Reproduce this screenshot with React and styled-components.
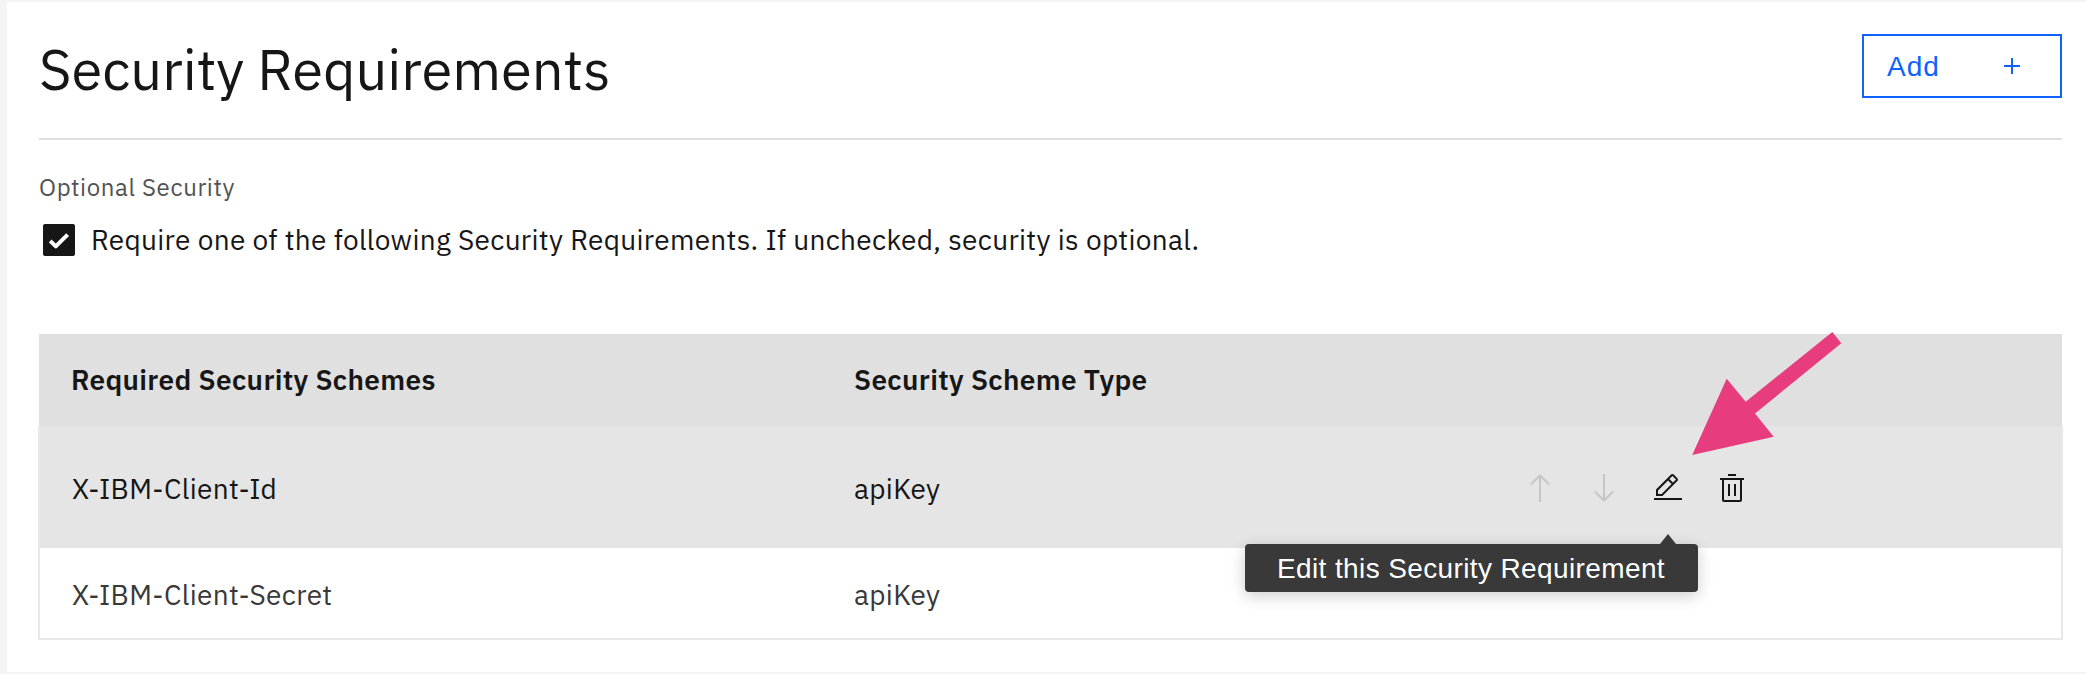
import React from "react";
import styled, { createGlobalStyle } from "styled-components";

const GlobalStyle = createGlobalStyle`
  * { box-sizing: border-box; }
  body {
    margin: 0;
    background: #f4f4f4;
    color: #161616;
    font-family: "IBM Plex Sans", Roboto, "Liberation Sans", sans-serif;
  }
`;

const Panel = styled.main`
  height: 670px;
  margin: 2px 0 2px 7px;
  padding: 32px 24px 0 32px;
  background: #fff;
`;

const Header = styled.header`
  display: flex;
  justify-content: space-between;
  align-items: flex-start;
  height: 106px;
  border-bottom: 2px solid #e0e0e0;
`;

const Title = styled.h1`
  margin: 0;
  font-size: 56px;
  line-height: 70px;
  font-weight: 400;
  letter-spacing: -0.03px;
  white-space: nowrap;
`;

const AddButton = styled.button`
  display: flex;
  justify-content: space-between;
  align-items: center;
  width: 200px;
  height: 64px;
  padding: 0 32px 0 23px;
  border: 2px solid #0f62fe;
  background: #fff;
  color: #0f62fe;
  font-family: "Liberation Sans", sans-serif;
  font-size: 28px;
  line-height: 36px;
  letter-spacing: 1px;
`;

const ButtonLabel = styled.span`
  padding-top: 2px;
`;

const GroupLabel = styled.div`
  margin-top: 31px;
  color: #525252;
  font-size: 24px;
  line-height: 32px;
  letter-spacing: 0.64px;
`;

const CheckRow = styled.label`
  display: flex;
  align-items: center;
  gap: 16px;
  height: 32px;
  margin-top: 21px;
  padding-left: 4px;
  font-size: 28px;
  line-height: 32px;
  letter-spacing: 0.32px;
  white-space: nowrap;
`;

const CheckBox = styled.span`
  display: flex;
  width: 32px;
  height: 32px;
  border-radius: 2px;
  background: #161616;
`;

const Table = styled.section`
  margin-top: 78px;
  font-size: 28px;
  line-height: 36px;
  letter-spacing: 0.32px;
`;

const TableHead = styled.div`
  display: grid;
  grid-template-columns: 783px 670px 1fr;
  align-items: center;
  height: 92px;
  padding: 0 0 1px 32px;
  background: #e0e0e0;
  font-weight: 600;
`;

const TableRow = styled.div`
  display: grid;
  grid-template-columns: 782px 670px 1fr;
  align-items: center;
  height: ${(p) => (p.$active ? 122 : 92)}px;
  margin: 0 -1px;
  padding: ${(p) => (p.$active ? 2 : 4)}px 0 0 32px;
  border: solid #e8e8e8;
  border-width: 0 2px ${(p) => (p.$active ? 0 : 2)}px;
  background: ${(p) => (p.$active ? "#e5e5e5" : "#fff")};
  color: ${(p) => (p.$active ? "#161616" : "#393939")};
`;

const Cell = styled.span`
  padding-top: ${(p) => p.$drop || 0}px;
  white-space: nowrap;
`;

const Actions = styled.div`
  display: flex;
  gap: 32px;
`;

const IconButton = styled.button`
  position: relative;
  display: flex;
  width: 32px;
  height: 32px;
  padding: 0;
  border: 0;
  background: none;
  color: ${(p) => (p.disabled ? "#c6c6c6" : "#161616")};
`;

const Icon = styled.svg`
  display: block;
  width: 32px;
  height: 32px;
  fill: currentColor;
`;

const Tooltip = styled.span`
  position: absolute;
  z-index: 1;
  top: 72px;
  right: -14px;
  width: 453px;
  height: 48px;
  padding-left: 32px;
  border-radius: 4px;
  background: #393939;
  box-shadow: 0 4px 16px rgba(0, 0, 0, 0.2);
  color: #fff;
  font-family: "Liberation Sans", sans-serif;
  font-size: 28px;
  line-height: 49px;
  letter-spacing: 0.38px;
  text-align: left;
  white-space: nowrap;

  &::before {
    content: "";
    position: absolute;
    top: -10px;
    right: 22px;
    border: solid transparent;
    border-width: 0 8px 10px;
    border-bottom-color: #393939;
  }
`;

const Pointer = styled.svg`
  position: absolute;
  z-index: 2;
  top: 330px;
  left: 1690px;
  width: 154px;
  height: 128px;
  pointer-events: none;
`;

const UpIcon = () => (
  <Icon viewBox="0 0 32 32">
    <path d="M16 2 6.2 11.8 7.6 13.2 15 5.8V30h2V5.8l7.4 7.4 1.4-1.4z" />
  </Icon>
);

const DownIcon = () => (
  <Icon viewBox="0 0 32 32">
    <path d="M16 30 25.8 20.2 24.4 18.8 17 26.2V2h-2v24.2l-7.4-7.4-1.4 1.4z" />
  </Icon>
);

const EditIcon = () => (
  <Icon viewBox="0 0 32 32">
    <path d="M2 26H30V28H2zM25.4 9c.8-.8.8-2 0-2.8l-3.6-3.6c-.8-.8-2-.8-2.8 0l-15 15V24h6.4L25.4 9zM20.4 4 24 7.6l-3 3L17.4 7 20.4 4zM6 22v-3.6l10-10 3.6 3.6-10 10H6z" />
  </Icon>
);

const TrashIcon = () => (
  <Icon viewBox="0 0 32 32">
    <path d="M12 12H14V24H12zM18 12H20V24H18zM4 6V8H6V28a2 2 0 0 0 2 2H24a2 2 0 0 0 2-2V8h2V6zM8 28V8H24V28zM12 2H20V4H12z" />
  </Icon>
);

export default function App() {
  return (
    <>
      <GlobalStyle />
      <Panel>
        <Header>
          <Title>Security Requirements</Title>
          <AddButton>
            <ButtonLabel>Add</ButtonLabel>
            <Icon viewBox="0 0 32 32">
              <path d="M17 15V8h-2v7H8v2h7v7h2v-7h7v-2z" />
            </Icon>
          </AddButton>
        </Header>
        <GroupLabel>Optional Security</GroupLabel>
        <CheckRow>
          <CheckBox>
            <Icon viewBox="0 0 32 32">
              <path
                d="M7.2 16.8 12.8 22.4 24.6 10.6"
                fill="none"
                stroke="#fff"
                strokeWidth="4"
                strokeLinejoin="round"
              />
            </Icon>
          </CheckBox>
          Require one of the following Security Requirements. If unchecked, security is optional.
        </CheckRow>
        <Table>
          <TableHead>
            <Cell>Required Security Schemes</Cell>
            <Cell>Security Scheme Type</Cell>
          </TableHead>
          <TableRow $active>
            <Cell $drop={2}>X-IBM-Client-Id</Cell>
            <Cell $drop={2}>apiKey</Cell>
            <Actions>
              <IconButton disabled><UpIcon /></IconButton>
              <IconButton disabled><DownIcon /></IconButton>
              <IconButton>
                <EditIcon />
                <Tooltip>Edit this Security Requirement</Tooltip>
              </IconButton>
              <IconButton><TrashIcon /></IconButton>
            </Actions>
          </TableRow>
          <TableRow>
            <Cell>X-IBM-Client-Secret</Cell>
            <Cell>apiKey</Cell>
          </TableRow>
        </Table>
      </Panel>
      <Pointer viewBox="1690 330 154 128">
        <path d="M1832.3 332 1841.3 343.2 1755 413.5 1773.7 436.7 1692.2 455 1726.7 378.7 1745.7 401.7z" fill="#e73c7e" />
      </Pointer>
    </>
  );
}
